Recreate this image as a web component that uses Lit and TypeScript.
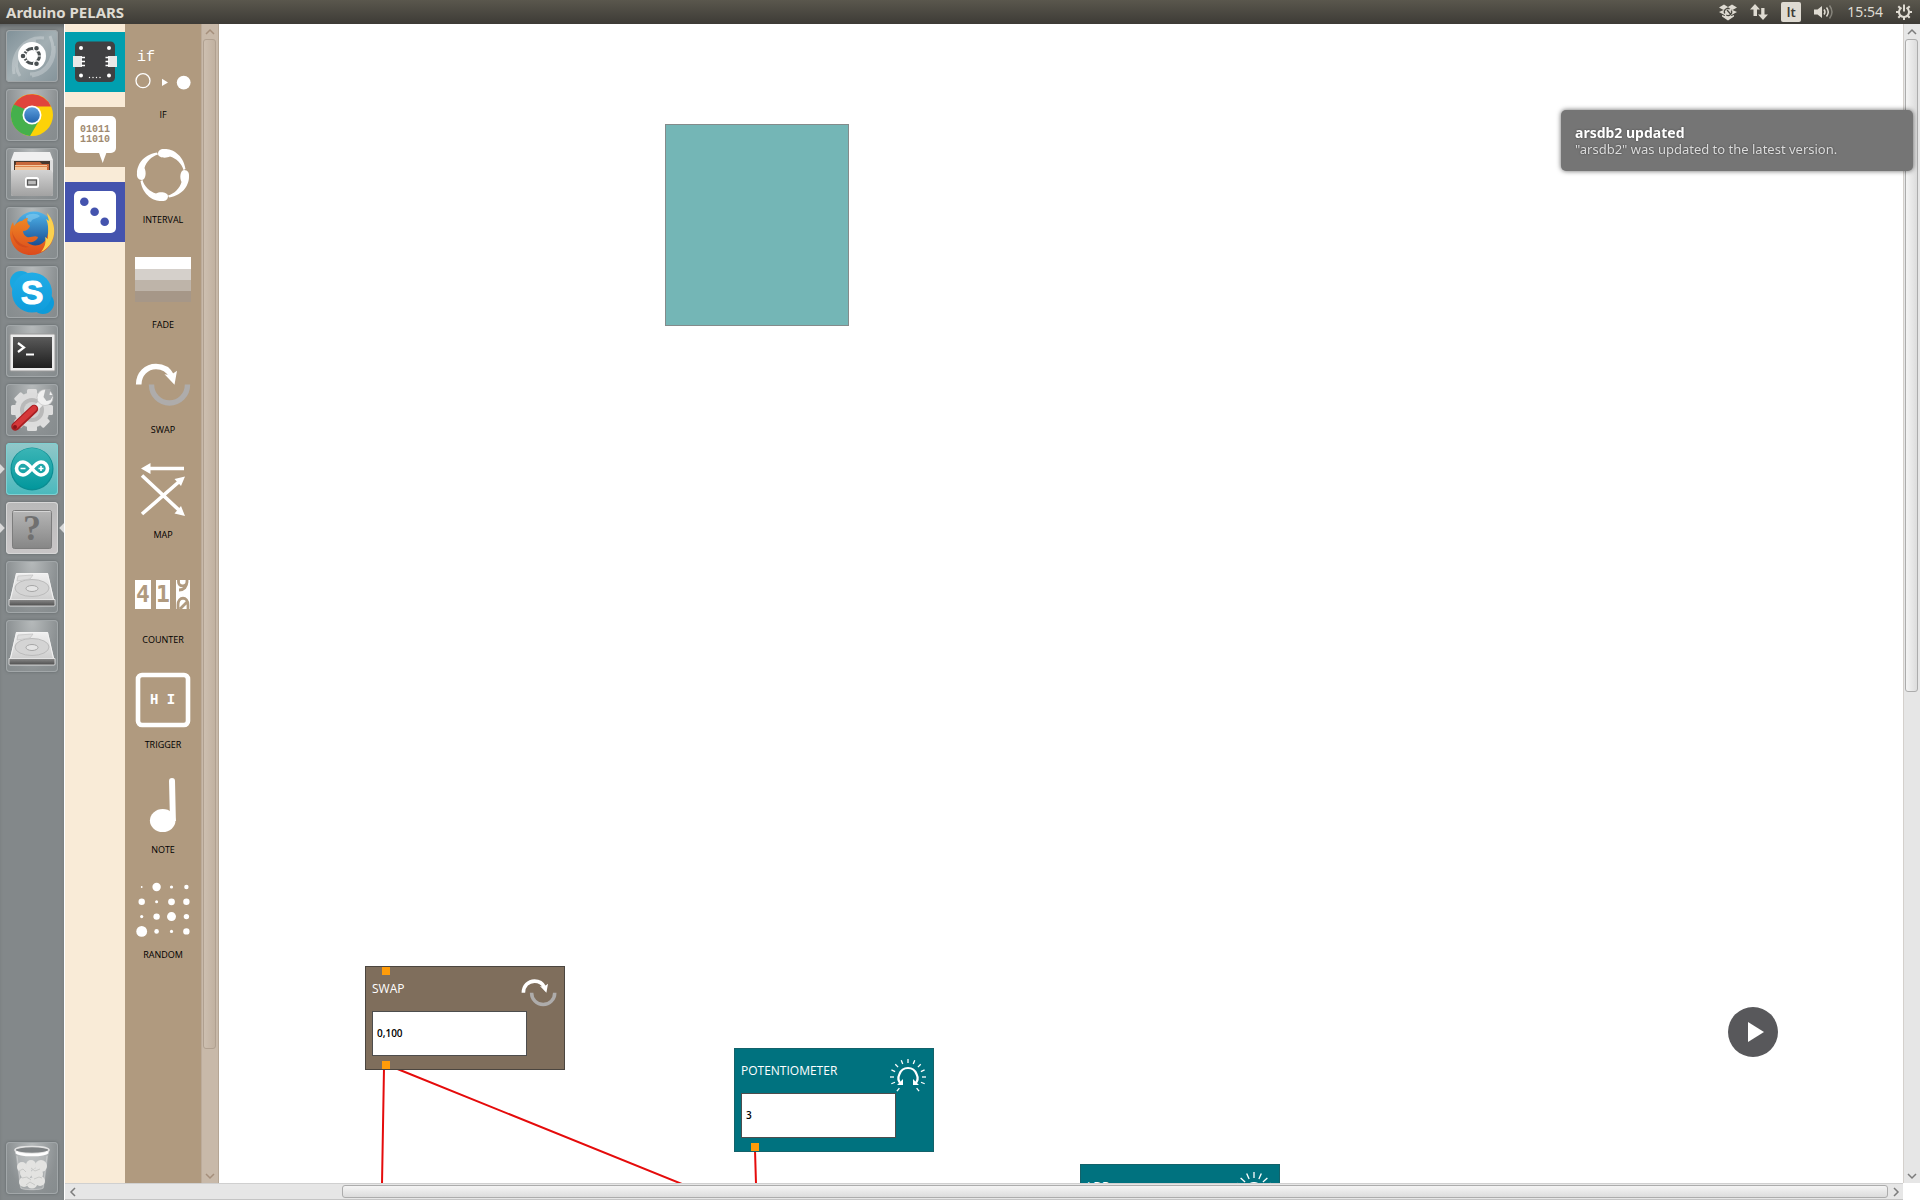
import { LitElement, html, svg, css, nothing, TemplateResult, SVGTemplateResult } from "lit";
import { customElement, property } from "lit/decorators.js";

/* ---------- Shared artwork ---------- */

const swapArt = svg`
  <path d="M3.700 27.500C3.700 17 11.500 9.500 21 9.500c7 0 12.500 3.300 15.500 9.500" fill="none" stroke="#fff" stroke-width="5.600"/>
  <path d="M29.500 17.200l6 1 6.500-4.500-2.500 14z" fill="#fff"/>
  <path d="M16.500 27.500c0 10.500 8 18.500 18 18.500s18-8 18-18.500" fill="none" stroke="#aeacab" stroke-width="5.400"/>`;

const potArt = svg`
  ${[-142, -112, -90, -67, -45, -22, 0, 22, 45, 67, 90, 112, 142].map(
    (a) => svg`<path d="M0-18V-14" transform="translate(18 17) rotate(${a})" stroke="#fff" stroke-width="1.300"/>`
  )}
  <path d="M11 24c-3-3-3-7-1.500-10 1.500-4 5-6 8.500-6s7 2 8.500 6c1.500 3 1.500 7-1.500 10" fill="none" stroke="#fff" stroke-width="2.200"/>
  <path d="M7 25h6v-6zM29 25h-6v-6z" fill="#fff"/>`;

const lightArt = svg`
  ${[-90, -68, -48, -24, 0, 24, 48, 68, 90].map(
    (a) => svg`<path d="M0-18V-12" transform="translate(18 14) rotate(${a})" stroke="#fff" stroke-width="1.300"/>`
  )}
  <path d="M10 26V15a8 8 0 0 1 16 0v11z" fill="none" stroke="#fff" stroke-width="2"/>`;

/* ---------- Palette ---------- */

interface Block { name: string; art: SVGTemplateResult; }

const randomRadii = [
  [0.9, 4.2, 1.6, 2.2],
  [3.2, 1.5, 3.4, 3.2],
  [1.6, 3.2, 4.5, 2.7],
  [5.4, 2.3, 1.6, 3.2],
];
const tadpole = "M-5-21C-5-25-2-26.500 2-26C9-26 20-21 22.500-6L20.500-5C19-11 13-17 7-18.500C3-16.500-4.500-17-5-21z";

const blocks: Block[] = [
  { name: "IF", art: svg`
    <text x="2" y="19" class="mono thin" font-size="15">if</text>
    <circle cx="8" cy="38.700" r="7" fill="none" stroke="#fff" stroke-width="1.300"/>
    <path d="M27 36.700l6 3.700-6 3.700z"/>
    <circle cx="48.700" cy="40.600" r="6.900"/>` },
  { name: "INTERVAL", art: svg`
    <g transform="translate(28 28)">
      ${[0, 90, 180, 270].map((a) => svg`<path d=${tadpole} transform="rotate(${a})"/>`)}
    </g>` },
  { name: "FADE", art: svg`
    <rect y="5" width="56" height="12"/>
    <rect y="17" width="56" height="11" fill="#d5d0cb"/>
    <rect y="28" width="56" height="11" fill="#beb4a9"/>
    <rect y="39" width="56" height="11" fill="#a69788"/>` },
  { name: "SWAP", art: swapArt },
  { name: "MAP", art: svg`
    <path d="M12 6.500h37M7 52L46 18M7 13.500L46 50" fill="none" stroke="#fff" stroke-width="3.600"/>
    <path d="M6 6.500l9.500-5.500v11zM50 14.500l-10.500 2.500 6.500 7zM50 54l-10.500-2.500 6.500-7.500z"/>` },
  { name: "COUNTER", art: svg`
    <rect y="13" width="16" height="29"/>
    <rect x="21" y="13" width="14" height="29"/>
    <rect x="41" y="13" width="14" height="29"/>
    <text x="1" y="35" class="mono cut" font-size="23">4</text>
    <text x="21" y="35" class="mono cut" font-size="23">1</text>
    <g fill="none" stroke="#b09a7f" stroke-width="2.800">
      <path d="M43.500 13v2c0 5 8 5.500 8.500 0v-2M52 14c0 6-3 9-8 9"/>
      <path d="M43 42v-4c0-9 10-9 10 0v4M45 42l7-7"/>
    </g>` },
  { name: "TRIGGER", art: svg`
    <rect x="3" y="3" width="50" height="50" rx="4" fill="none" stroke="#fff" stroke-width="4.600"/>
    <text x="15" y="32" class="mono strong" font-size="14" xml:space="preserve">H I</text>` },
  { name: "NOTE", art: svg`
    <ellipse cx="27.700" cy="43.600" rx="12.800" ry="11.500"/>
    <path d="M34 4a3 3 0 0 1 6 0l.900 40H35z"/>` },
  { name: "RANDOM", art: svg`${randomRadii.map((row, y) =>
    row.map((r, x) => svg`<circle cx=${6.7 + x * 14.9} cy=${5 + y * 14.8} r=${r}/>`))}` },
];

const tabs = [
  { name: "Boards", tone: "teal", art: svg`
    <rect x="10" y="9.500" width="40" height="40.500" rx="4.500" fill="#404042"/>
    <g fill="#fff">
      <circle cx="16" cy="16" r="2"/><circle cx="44" cy="16" r="2"/>
      <circle cx="16" cy="43.600" r="2"/><circle cx="44" cy="43.600" r="2"/>
      ${[24.5, 28, 31.500, 35].map((x) => svg`<circle cx=${x} cy="45.500" r=".7"/>`)}
    </g>
    <rect x="8" y="24" width="9" height="11" fill="#e8e8e8"/>
    <rect x="43" y="24" width="9" height="11" fill="#e8e8e8"/>
    <path d="M16 25.500h4M16 29.500h4M16 33.500h4M40.500 25.500h4M40.500 29.500h4M40.500 33.500h4" stroke="#fff" stroke-width="1.500"/>` },
  { name: "Logic", tone: "tan", art: svg`
    <rect x="9" y="9" width="42" height="37" rx="5" fill="#fff"/>
    <path d="M33.700 45h8l-4 11z" fill="#fff"/>
    <text x="15" y="25" class="mono bits" font-size="10">01011</text>
    <text x="15" y="35" class="mono bits" font-size="10">11010</text>` },
  { name: "Games", tone: "blue", art: svg`
    <rect x="9" y="9" width="42" height="42" rx="5" fill="#fff"/>
    <g fill="#4453ae"><circle cx="19.300" cy="19.700" r="4.300"/><circle cx="29.600" cy="29.700" r="4.300"/><circle cx="39.700" cy="39.700" r="4.300"/></g>` },
];

/* ---------- Launcher ---------- */

const drive = svg`
  <path d="M10 12h32l6 26v6H4v-6z" fill="#dcdcdc"/>
  <path d="M10.500 12.500h31l6 26H4.500z" fill="url(#lid)" stroke="#f4f4f4"/>
  <ellipse cx="26" cy="27" rx="17" ry="8.500" fill="#d4d4d4" stroke="#bbb"/>
  <ellipse cx="26" cy="27.500" rx="6" ry="3" fill="#e4e4e4" stroke="#a6a6a6"/>
  <path d="M12 15l15-1-3 4-13 2z" fill="#dedede" stroke="#c2c2c2" stroke-width=".7"/>
  <path d="M3 38.500h46V44a1 1 0 0 1-1 1H4a1 1 0 0 1-1-1z" fill="url(#rim)" stroke="#eee" stroke-width=".8"/>`;

interface App { name: string; cls?: string; before?: boolean; after?: boolean; art: SVGTemplateResult; }

const launcherApps: App[] = [
  { name: "Search your computer", cls: "dash", art: svg`
    <path d="M8 44C4 22 20 6 38 8M14 46C6 34 12 14 30 11M44 6c8 18-2 38-20 38M48 16c2 16-8 28-22 30" fill="none" stroke="#fff" stroke-opacity=".25" stroke-width="3"/>
    <circle cx="26" cy="26" r="14" fill="#fff"/>
    <circle cx="26" cy="26" r="7.500" fill="none" stroke="#4a5052" stroke-width="3"/>
    <g fill="#4a5052" stroke="#fff" stroke-width="1.200"><circle cx="17" cy="26" r="2.900"/><circle cx="30.500" cy="18.200" r="2.900"/><circle cx="30.500" cy="33.800" r="2.900"/></g>
    <path d="M18.500 20l3 2M18.500 32l3-2M32 26h4" stroke="#fff" stroke-width="1.200"/>` },
  { name: "Google Chrome", art: svg`
    <circle cx="26" cy="26" r="21" fill="#fdd208"/>
    <path d="M26 26L7.800 15.500A21 21 0 0 0 24 47l10-17z" fill="#45b04c"/>
    <path d="M26 26L7.800 15.500A21 21 0 0 1 45 17.500H26z" fill="#e0443c"/>
    <path d="M7.800 15.500L17 31l4-10z" fill="#45b04c"/>
    <circle cx="26" cy="26" r="9.500" fill="#fff"/>
    <circle cx="26" cy="26" r="7.800" fill="url(#orb)"/>` },
  { name: "Files", art: svg`
    <path d="M8 4h36l3 8H5z" fill="#f0f0f0"/>
    <path d="M5 12h42v34a2 2 0 0 1-2 2H7a2 2 0 0 1-2-2z" fill="#dedede"/>
    <path d="M8 13h36v12H8z" fill="#46392f"/>
    <path d="M10 14h24l2 2h7v8H9z" fill="#c8683a"/>
    <path d="M9 17h32v7H9z" fill="#f3c79c"/><path d="M9 18.500h33" stroke="#e0854b"/>
    <path d="M7 22h38l2 3v21a2 2 0 0 1-2 2H7a2 2 0 0 1-2-2V23z" fill="url(#rim2)"/>
    <rect x="20" y="30" width="12" height="9" rx="1.500" fill="#eee" stroke="#fff" stroke-width="2"/>
    <rect x="21.500" y="32" width="9" height="5" fill="#bbb" stroke="#555" stroke-width="1.300"/>` },
  { name: "Firefox", art: svg`
    <circle cx="28" cy="24" r="19.500" fill="url(#globe)"/>
    <path d="M20 9c4-3 11-3 14 0-3 3-8 2-9 6-3 0-5-3-5-6z" fill="#8fd3f3" fill-opacity=".5"/>
    <path d="M43 9c4 5 6 12 5 19-2 12-11 20-23 20C12 48 4 38 4 26c0-4 1-8 3-11l1 4c2-3 5-5 8-5 2-2 4-3 6-3-1 2-1 4 0 6l2 2c-1 3-4 5-7 5 0 3 2 5 4 6 4 1 7-2 11 0-1 4-6 6-11 5 6 6 17 4 20-5 2-6 2-14 2-21z" fill="url(#fur)"/>
    <path d="M41 6c5 5 8 13 7 21-1 8-6 15-13 18 5-6 5-12 4-15l3 2c0-8 1-14-2-20l3 2z" fill="#fbd14f"/>
    <path d="M6 24c2 8 8 14 17 16-9 2-16-4-17-16z" fill="#c9421c" fill-opacity=".6"/>` },
  { name: "Skype", art: svg`
    <circle cx="15" cy="16" r="11" fill="#1aa7e0"/><circle cx="37" cy="37" r="11" fill="#0d9bd9"/>
    <circle cx="26" cy="26.500" r="20" fill="url(#sky)"/>
    <text x="26" y="38" text-anchor="middle" class="skype">S</text>` },
  { name: "Terminal", art: svg`
    <rect x="4" y="9" width="45" height="37" rx="1" fill="#ececec" stroke="#9a9a9a"/>
    <rect x="7" y="12" width="39" height="31" fill="url(#crt)"/>
    <path d="M12 18l6 4.500-6 4.500" fill="none" stroke="#fff" stroke-width="2.200"/>
    <path d="M20 29.500h8" stroke="#fff" stroke-width="2"/>` },
  { name: "System Settings", art: svg`
    ${[0, 45, 90, 135].map((a) => svg`<rect x="21" y="5" width="10" height="42" rx="1.500" fill="#dedede" transform="rotate(${a} 26 26)"/>`)}
    <circle cx="26" cy="26" r="17.500" fill="#dcdcdc"/><circle cx="26" cy="26" r="12" fill="#b9b9b9"/><circle cx="26" cy="26" r="8" fill="#d2d2d2"/>
    <path d="M27 27l11-11" stroke="#ececec" stroke-width="6"/>
    <circle cx="39" cy="13.500" r="8" fill="#f0f0f0" stroke="#bbb" stroke-width=".6"/><path d="M37.500 13l2-8h5l-1 6h4l-3 5-4 1z" fill="#a9acae"/>
    <path d="M9.500 42.500L28 25" stroke="#a81f22" stroke-width="8.500" stroke-linecap="round"/>
    <path d="M9.500 42L28 24.500" stroke="#d5383a" stroke-width="5.500" stroke-linecap="round"/>
    <circle cx="9" cy="43" r="2" fill="#8a1518"/>` },
  { name: "Arduino", cls: "arduino", before: true, art: svg`
    <circle cx="26" cy="26" r="21.500" fill="#0a8d92"/><circle cx="26" cy="25.500" r="20.500" fill="url(#ard)"/>
    <path d="M26 25.500c-4-5-6-6.500-9-6.500a6.500 6.500 0 0 0 0 13c3 0 5-1.500 9-6.500s6-6.500 9-6.500a6.500 6.500 0 0 1 0 13c-3 0-5-1.500-9-6.500z" fill="none" stroke="#fff" stroke-width="3.600"/>
    <path d="M14.500 25.500h5M32.500 25.500h5M35 23v5" stroke="#fff" stroke-width="1.600"/>` },
  { name: "Unknown application", cls: "pale", before: true, after: true, art: svg`
    <rect x="6.500" y="8.500" width="39" height="38" rx="2" fill="url(#ques)" stroke="#7c7c7c"/>
    <path d="M7.500 9.500h37" stroke="#d5d5d5"/>
    <text x="26" y="38" text-anchor="middle" class="question">?</text>` },
  { name: "Drive 1", art: drive },
  { name: "Drive 2", art: drive },
];

const trash = svg`
  <path d="M9 8h34l-5 38c-1 3-23 3-24 0z" fill="#fff" fill-opacity=".22"/>
  <g fill="#e3e3e1"><circle cx="16" cy="25" r="5"/><circle cx="25" cy="23" r="5"/><circle cx="35" cy="24" r="6"/><circle cx="20" cy="31" r="6"/><circle cx="31" cy="32" r="6"/><circle cx="18" cy="40" r="5"/><circle cx="26" cy="41" r="5.500"/><circle cx="34" cy="39" r="5"/></g>
  <path d="M13 29l4-2 3 3M25 26l4 3 5-2M16 36l5-1 4 3M28 37l5-2 3 1M20 43l4-3 5 3" fill="none" stroke="#c8c9c7"/>
  <path d="M11 14l4 32c1 2 21 2 22 0l4-32" fill="none" stroke="#e8e8e8" stroke-opacity=".4"/>
  <ellipse cx="26" cy="8" rx="17" ry="3.500" fill="#7f8385" stroke="#e2e2e2" stroke-width="1.600"/>
  <path d="M10 10c4 4 28 4 32 0" fill="none" stroke="#fff" stroke-width="2.500"/>`;

/* ---------- Canvas data ---------- */

interface Sketch {
  id: string; title: string; tone: string; x: number; y: number;
  value: string; hasInput: boolean; art: SVGTemplateResult; artBox: string;
}

const sketchNodes: Sketch[] = [
  { id: "swap", title: "SWAP", tone: "brown", x: 146, y: 942, value: "0,100", hasInput: true, art: swapArt, artBox: "0 5 56 46" },
  { id: "pot", title: "POTENTIOMETER", tone: "sea", x: 515, y: 1024, value: "3", hasInput: false, art: potArt, artBox: "0 0 36 36" },
  { id: "ldr", title: "LDR", tone: "sea", x: 861, y: 1140, value: "", hasInput: false, art: lightArt, artBox: "0 0 36 36" },
];

const chevrons: Record<string, string> = {
  up: "M2 8l4-4 4 4", down: "M2 4l4 4 4-4", left: "M8 2L4 6l4 4", right: "M4 2l4 4-4 4",
};

@customElement("scroll-rail")
export class ScrollRail extends LitElement {
  @property() axis: "x" | "y" = "y";
  @property() name = "";
  @property({ type: Number }) start = 0;
  @property({ type: Number }) size = 50;

  static styles = css`
    :host { display: flex; --rail: #e6e6e6; --thumb-a: #f4f4f4; --thumb-b: #dcdcdc; --edge: #acacac; --mark: #7c7c7c; background: var(--rail); }
    :host([tone="tan"]) { --rail: #c8b9a9; --thumb-a: #cdbfb0; --thumb-b: #c1b1a0; --edge: #b0a090; --mark: #a58f7b; }
    .rail { display: flex; flex: 1; box-sizing: border-box; }
    .y { flex-direction: column; border-left: 1px solid #d4d0cc; }
    .x { border-top: 1px solid #d0d0d0; border-bottom: 1px solid #c4c4c4; }
    :host([tone="tan"]) .y { border-left-color: #bcab9a; border-right: 1px solid #b5a695; }
    button { border: 0; padding: 0; margin: 0; background: none; flex: 0 0 15px; display: grid; place-items: center; }
    .arrow { display: block; width: 12px; height: 12px; fill: none; stroke: var(--mark); stroke-width: 1.5; }
    .track { flex: 1; display: flex; min-width: 0; min-height: 0; }
    .y .track { flex-direction: column; }
    .thumb { box-sizing: border-box; border: 1px solid var(--edge); border-radius: 3px; }
    .y .thumb { margin: 0 2px 0 1px; background: linear-gradient(90deg, var(--thumb-a), var(--thumb-b)); }
    .x .thumb { margin: 1px 0; background: linear-gradient(var(--thumb-a), var(--thumb-b)); }
  `;

  private arrow(dir: string) {
    return html`<button aria-label="${this.name} ${dir}">
      <svg class="arrow" viewBox="0 0 12 12"><path d=${chevrons[dir]}/></svg></button>`;
  }

  render() {
    const v = this.axis === "y";
    const prop = v ? "height" : "width";
    return html`<div class="rail ${this.axis}">
      ${this.arrow(v ? "up" : "left")}
      <div class="track">
        <div style="${prop}:${this.start}%"></div>
        <div class="thumb" style="${prop}:${this.size}%"></div>
      </div>
      ${this.arrow(v ? "down" : "right")}
    </div>`;
  }
}

@customElement("sketch-node")
export class SketchNode extends LitElement {
  @property({ attribute: false }) node!: Sketch;

  static styles = css`
    :host { display: block; }
    .node { position: relative; box-sizing: border-box; width: 200px; height: 104px; padding: 11px 6px 0; border: 1px solid #4b453f; background: #7f6e5c; color: #fff; }
    .sea { background: #00727f; border-color: #13626a; }
    .head { display: flex; justify-content: space-between; height: 33px; }
    .title { font-size: 12px; line-height: 22px; }
    .art { display: block; width: 36px; height: 30px; margin-right: 1px; overflow: visible; }
    .sea .art { height: 36px; }
    .field { display: block; box-sizing: border-box; width: 155px; height: 45px; margin: 0; padding: 0 4px 2px; border: 1px solid #4d4d4d; border-radius: 0; background: #fff; color: #000; font: 600 10px "Open Sans", "Noto Sans", sans-serif; outline: none; }
    .port { position: absolute; left: 16px; width: 8px; height: 8px; background: #ff9c0a; }
    .in { top: 0; }
    .out { bottom: 0; }
  `;

  render() {
    const n = this.node;
    return html`<div class="node ${n.tone}">
      ${n.hasInput ? html`<span class="port in"></span>` : nothing}
      <div class="head">
        <label class="title" for="value">${n.title}</label>
        <svg class="art" viewBox=${n.artBox} aria-hidden="true">${n.art}</svg>
      </div>
      <input class="field" id="value" type="text" .value=${n.value}>
      <span class="port out"></span>
    </div>`;
  }
}

@customElement("app-root")
export class AppRoot extends LitElement {
  static styles = css`
    :host { display: flex; flex-direction: column; height: 100vh; overflow: hidden; background: #fff; font-family: "Open Sans", "Noto Sans", sans-serif; }
    button { border: 0; margin: 0; padding: 0; background: none; font: inherit; color: inherit; }
    svg { display: block; }

    .topbar { flex: 0 0 24px; display: flex; align-items: center; justify-content: space-between; padding: 0 8px 0 6px; background: linear-gradient(#5a574d, #3d3b36); color: #dfdbd2; }
    .title { margin: 0; font: 700 15px/20px "Noto Sans", sans-serif; }
    .tray { display: flex; align-items: center; gap: 13px; font: 14px/20px "Noto Sans", sans-serif; }
    .tray svg { fill: #dfdbd2; }
    .lang { width: 20px; height: 20px; border-radius: 2px; background: #dfdbd2; color: #3d3b36; font-size: 13px; font-weight: 600; line-height: 20px; }

    .body { flex: 1; display: flex; min-height: 0; }
    .launcher { flex: 0 0 64px; box-sizing: border-box; display: flex; flex-direction: column; gap: 7px; padding: 6px 0; background: #83888a; box-shadow: inset 0 4px 4px -2px #5e6365; }
    .slot { display: flex; align-items: center; justify-content: space-between; }
    .pip { width: 6px; height: 10px; }
    .pip.on { background: #d9d9d9; }
    .pip.on.before { clip-path: polygon(0 0, 80% 50%, 0 100%); }
    .pip.on.after { clip-path: polygon(100% 0, 20% 50%, 100% 100%); }
    .tile { width: 52px; height: 52px; border-radius: 4px; background: radial-gradient(ellipse at 50% 0, #b6babb, #8b9092 70%, #858b8d); box-shadow: inset 0 0 0 1px #a2a7a9, 0 0 3px #5e6466; }
    .tile.dash { background: linear-gradient(135deg, #7f9098, #a3afb3 50%, #84939a); }
    .tile.arduino { background: linear-gradient(#93c7c9, #4ab9bd); box-shadow: inset 0 0 0 1px #7fd0d2, 0 0 3px #5e6466; }
    .tile.pale { background: linear-gradient(#b9b9b9, #c9c6c7); box-shadow: inset 0 0 0 1px #d6d6d6, 0 0 3px #5e6466; }
    .tile svg { width: 52px; height: 52px; }
    .trash { margin-top: auto; }
    .skype { font: 700 34px "Liberation Sans", Arial, sans-serif; fill: #fff; stroke: #fff; }
    .question { font: 700 36px "Liberation Serif", serif; fill: #707070; }

    .app { flex: 1; min-width: 0; display: grid; grid-template: minmax(0, 1fr) 17px / minmax(0, 1fr) 17px; padding-left: 1px; }
    .work { display: flex; min-width: 0; }
    .tabs { flex: 0 0 60px; display: flex; flex-direction: column; gap: 15px; padding-top: 8px; background: #f9ebd7; }
    .tab { height: 60px; }
    .teal { background: #009faf; }
    .tan { background: #b09a7f; }
    .blue { background: #4453ae; }
    .palette { flex: 0 0 76px; display: flex; flex-direction: column; align-items: center; gap: 24px; padding-top: 18px; box-sizing: border-box; background: #b09a7f; }
    .block { display: flex; flex-direction: column; align-items: center; gap: 9px; color: #000; font-size: 9px; line-height: 16px; font-weight: 500; }
    .block svg { width: 56px; height: 56px; fill: #fff; }
    .inner-rail { flex: 0 0 18px; }
    .mono { font-family: "DejaVu Sans Mono", monospace; font-weight: 400; fill: #fff; }
    .cut { fill: #b09a7f; font-weight: 700; }
    .thin { font-family: "Liberation Mono", monospace; }
    .strong { font-family: "Liberation Mono", monospace; font-weight: 700; }
    .bits { fill: #a08a70; font-family: "Liberation Mono", monospace; font-weight: 700; }

    .canvas { flex: 1; min-width: 0; position: relative; overflow: hidden; background: #fff; }
    .area { position: absolute; box-sizing: border-box; width: 184px; height: 202px; border: 1px solid #848b8b; background: #74b6b6; }
    .wires { position: absolute; inset: 0; width: 100%; height: 100%; fill: none; stroke: #e50b0b; stroke-width: 2; }
    .placed { position: absolute; }
    .play { position: absolute; right: 125px; bottom: 126px; width: 50px; height: 50px; border-radius: 50%; background: #58585b; }
    .play svg { width: 50px; height: 50px; fill: #fff; }

    .note { position: fixed; top: 110px; right: 7px; box-sizing: border-box; width: 352px; padding: 14px; border-radius: 5px; background: #757575; box-shadow: 0 0 5px rgba(0, 0, 0, .6); color: #fff; text-shadow: 0 0 2px rgba(0, 0, 0, .5); font-family: "Noto Sans", sans-serif; }
    .note-title { margin: 0; font-size: 14px; line-height: 17px; font-weight: 700; }
    .note-text { margin: 0; font-size: 13px; line-height: 16px; color: #dcdcdc; }
  `;

  private tile(a: App, extra = ""): TemplateResult {
    return html`<div class="slot ${extra}">
      <span class="pip before ${a.before ? "on" : ""}"></span>
      <button class="tile ${a.cls ?? ""}" aria-label=${a.name}><svg viewBox="0 0 52 52" aria-hidden="true">${this.paints()}${a.art}</svg></button>
      <span class="pip after ${a.after ? "on" : ""}"></span>
    </div>`;
  }

  private paints() {
    const ramp = (id: string, a: string, b: string) => svg`
      <linearGradient id=${id} x1="0" y1="0" x2="0" y2="1"><stop offset="0" stop-color=${a}/><stop offset="1" stop-color=${b}/></linearGradient>`;
    return svg`<defs>
      ${ramp("lid", "#f0f0f0", "#cfcfcf")}
      ${ramp("rim", "#8b8b8b", "#4d4d4d")}
      ${ramp("rim2", "#d3d3d3", "#a2a2a2")}
      ${ramp("orb", "#5d9fdd", "#2263ad")}
      ${ramp("globe", "#4fb6ec", "#123f86")}
      ${ramp("fur", "#f08a24", "#dc4a1c")}
      ${ramp("sky", "#21ace6", "#0f9cdb")}
      ${ramp("crt", "#5a5a5a", "#1e1e1e")}
      ${ramp("ard", "#3bb5b6", "#02979c")}
      ${ramp("ques", "#b6b6b6", "#868686")}
    </defs>`;
  }

  render() {
    return html`
      <header class="topbar">
        <h1 class="title">Arduino PELARS</h1>
        <div class="tray">
          <button aria-label="Dropbox"><svg width="18" height="18" viewBox="0 0 18 18">
            <path d="M5 1.500L9 4l-4.500 3L0 4.500zM13 1.500L9 4l4.500 3L18 4.500zM0 9l4.500-2L9 9.500 5.500 12zM18 9l-4.500-2L9 9.500l3.500 2.500zM3 12l2.500 1L9 10.500l3.500 2.500 2.500-1v1.500L9 17.500l-6-4z"/>
            <circle cx="9" cy="9" r="4.500"/>
            <path d="M5.700 10.500a3.500 3.500 0 0 1 5-4.500M12.300 7.500a3.500 3.500 0 0 1-5 4.500M8 7l3.500 4" fill="none" stroke="#4a4840" stroke-width="1.300"/></svg></button>
          <button aria-label="Network"><svg width="18" height="18" viewBox="0 0 18 18">
            <path d="M5 1l5 5.500H7V13H3.500V6.500H0zM13 17l-5-5.500h3.200V5h3.300v6.500H18z"/></svg></button>
          <button class="lang">lt</button>
          <button aria-label="Volume"><svg width="20" height="18" viewBox="0 0 20 18">
            <path d="M0 6.500h3.500L8 3v12l-4.500-3.500H0z"/>
            <g fill="none" stroke="#dfdbd2" stroke-width="1.500"><path d="M10 6.500q2 2.500 0 5"/><path d="M12.500 4.500q3.500 4.500 0 9"/><path d="M15.500 2.500q5 6.500 0 13" stroke-opacity=".4"/></g></svg></button>
          <button>15:54</button>
          <button aria-label="Session"><svg width="16" height="18" viewBox="0 0 16 18">
            <g fill="none" stroke="#dfdbd2" stroke-width="2">
              <path d="M5.500 4.700a5 5 0 1 0 5 0"/><path d="M8 1.500v7"/>
              <path d="M0 9h3M13 9h3M8 14v3M2.300 3.300l2 2M13.700 3.300l-2 2M2.300 14.700l2-2M13.700 14.700l-2-2"/></g></svg></button>
        </div>
      </header>

      <div class="body">
        <nav class="launcher" aria-label="Launcher">
          ${launcherApps.map((a) => this.tile(a))}
          ${this.tile({ name: "Trash", art: trash }, "trash")}
        </nav>

        <main class="app">
          <div class="work">
            <div class="tabs">
              ${tabs.map((t) => html`<button class="tab ${t.tone}" aria-label=${t.name}>
                <svg width="60" height="60" viewBox="0 0 60 60" aria-hidden="true">${t.art}</svg></button>`)}
            </div>
            <div class="palette">
              ${blocks.map((b) => html`<button class="block">
                <svg viewBox="0 0 56 56" aria-hidden="true">${b.art}</svg><span>${b.name}</span></button>`)}
            </div>
            <scroll-rail class="inner-rail" tone="tan" name="Scroll palette" axis="y" start="0" size="89.500"></scroll-rail>
            <div class="canvas">
              <div class="area" style="left:446px;top:100px"></div>
              <svg class="wires" aria-hidden="true">
                <path d="M165 1044L163 1160M176 1044L463 1160M536 1126L537 1160"/>
              </svg>
              ${sketchNodes.map((n) => html`<sketch-node class="placed" style="left:${n.x}px;top:${n.y}px" .node=${n}></sketch-node>`)}
              <button class="play" aria-label="Play"><svg viewBox="0 0 50 50"><path d="M20 15l16 10-16 10z"/></svg></button>
            </div>
          </div>
          <scroll-rail name="Scroll page" axis="y" start="0" size="57.800"></scroll-rail>
          <scroll-rail name="Scroll page" axis="x" start="14.500" size="85.500"></scroll-rail>
        </main>
      </div>

      <aside class="note" role="status">
        <p class="note-title">arsdb2 updated</p>
        <p class="note-text">"arsdb2" was updated to the latest version.</p>
      </aside>`;
  }
}
